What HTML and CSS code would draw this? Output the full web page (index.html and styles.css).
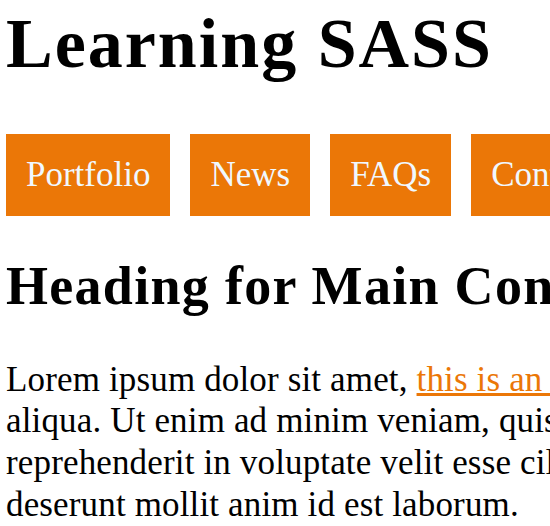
FILE: index.html
```html
<!DOCTYPE html>
<html lang="en">
<head>
<meta charset="utf-8">
<title>Learning SASS</title>
<link rel="stylesheet" href="styles.css">
</head>
<body>
<div class="page">
  <header class="site-header">
    <h1 class="site-title">Learning SASS</h1>
    <nav class="main-nav">
      <a class="nav-link" href="#">Portfolio</a>
      <a class="nav-link" href="#">News</a>
      <a class="nav-link" href="#">FAQs</a>
      <a class="nav-link" href="#">Contact</a>
    </nav>
  </header>
  <main class="content">
    <h2 class="content-title">Heading for Main Content</h2>
    <p class="content-text">Lorem ipsum dolor sit amet, <a class="text-link" href="#">this is an example link</a>, consectetur adipiscing elit, sed do eiusmod tempor incididunt ut labore et dolore magna<br>aliqua. Ut enim ad minim veniam, quis nostrud exercitation ullamco laboris nisi ut aliquip ex ea commodo consequat. Duis aute irure dolor in<br>reprehenderit in voluptate velit esse cillum dolore eu fugiat nulla pariatur. Excepteur sint occaecat cupidatat non proident, sunt in culpa qui officia<br>deserunt mollit anim id est laborum.</p>
  </main>
</div>
</body>
</html>
```
FILE: styles.css
```css
html, body {
  margin: 0;
  padding: 0;
  background: #ffffff;
}

body {
  font-family: "Liberation Serif", "Times New Roman", serif;
  font-size: 35px;
  line-height: 41.6px;
  color: #000000;
}

.page {
  width: max-content;
  padding: 0 6px;
}

.site-title {
  margin: 2px 0 48px;
  font-size: 70px;
  font-weight: bold;
  line-height: 84px;
  letter-spacing: 2px;
}

.main-nav {
  display: flex;
  gap: 20px;
}

.nav-link {
  display: block;
  padding: 20px;
  background: #eb7707;
  color: #f0f8ff;
  text-decoration: none;
}

.content-title {
  margin: 39px 0 42px;
  font-size: 54px;
  font-weight: bold;
  line-height: 62px;
  letter-spacing: 1.3px;
}

.content-text {
  margin: 0;
  line-height: 41.67px;
  letter-spacing: 0.15px;
}

.text-link {
  color: #eb7707;
}
```
